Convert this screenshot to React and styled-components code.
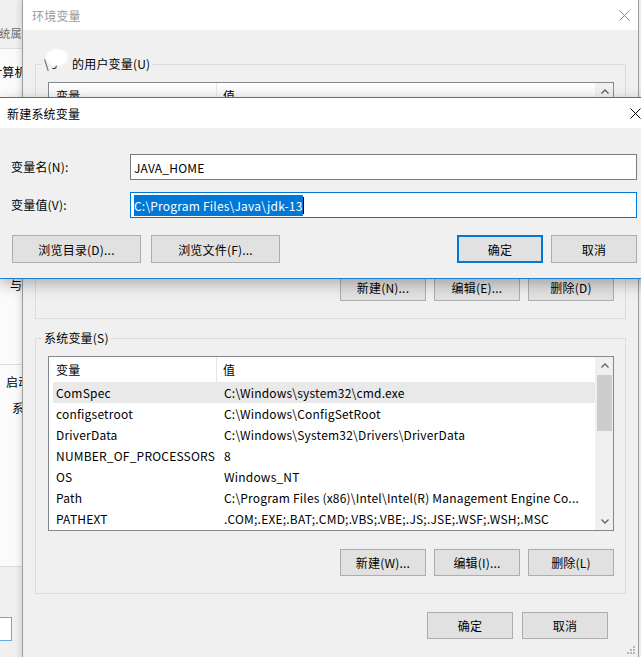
import React from 'react';
import styled, { createGlobalStyle } from 'styled-components';

const Global = createGlobalStyle`
  html, body {
    margin: 0;
    padding: 0;
    background: #f0f0f0;
  }
  body {
    font-family: "Noto Sans CJK SC", "Noto Sans", sans-serif;
    font-size: 12px;
    letter-spacing: 0.2px;
    color: #000;
  }
`;

const Desktop = styled.div`
  position: relative;
  width: 641px;
  height: 657px;
  overflow: hidden;
  background: #f0f0f0;
`;

/* ---------- background window (系统属性) ---------- */
const BackWindow = styled.div`
  position: absolute;
  left: -100px;
  top: 0;
  width: 124px;
  height: 657px;
  display: flex;
  flex-direction: column;
  background: #fbfbfb;
`;

const BackTitle = styled.div`
  box-sizing: border-box;
  height: 49px;
  padding: 24px 0 0 88px;
  line-height: 18px;
  font-size: 11px;
  white-space: nowrap;
  color: #6d6d6d;
  background: #f0f0f0;
  border-bottom: 1px solid #dcdcdc;
`;

const BackText = styled.div`
  height: 18px;
  line-height: 18px;
  margin-top: ${p => p.$gap}px;
  padding-left: ${p => p.$indent}px;
  white-space: nowrap;
`;

const BackRule = styled.div`
  height: 1px;
  margin-top: ${p => p.$gap}px;
  background: #dcdcdc;
`;

const BackFooter = styled.div`
  flex: 1;
  margin-top: ${p => p.$gap}px;
  padding-top: 50px;
  background: #f0f0f0;
  border-top: 1px solid #dcdcdc;
`;

const BackInput = styled.div`
  box-sizing: border-box;
  width: 92px;
  height: 24px;
  margin-left: 20px;
  background: #fff;
  border: 1px solid #6aa9e4;
`;

/* ---------- 环境变量 window ---------- */
const EnvWindow = styled.div`
  position: absolute;
  left: 22px;
  top: -1px;
  box-sizing: border-box;
  width: 617px;
  height: 662px;
  display: flex;
  flex-direction: column;
  background: #f0f0f0;
  border: 1px solid #9b9b9b;
  box-shadow: -2px 0 6px rgba(0, 0, 0, 0.12);
`;

const EnvTitleBar = styled.div`
  height: 30px;
  display: flex;
  align-items: center;
  justify-content: space-between;
  padding: 0 8px 0 9px;
  background: #fff;
  color: #999;
`;

const EnvBody = styled.div`
  display: flex;
  flex-direction: column;
  padding: 26px 12px 0;
`;

const Group = styled.fieldset`
  margin: ${p => p.$top || 0}px 0 0;
  padding: 10px 11px 17px 12px;
  border: 1px solid #dcdcdc;
  min-width: 0;
`;

const Legend = styled.legend`
  position: relative;
  margin-left: -6px;
  padding: 0 2px;
  line-height: 16px;
`;

const Owner = styled.span`
  display: inline-block;
  width: 28px;
  color: #333;
`;

const Blob = styled.span`
  position: absolute;
  left: 5px;
  top: -6px;
  width: 20px;
  height: 15px;
  border-radius: 50%;
  background: #fff;
  box-shadow: 0 0 2px 1px #fff;
`;

const ListBox = styled.div`
  box-sizing: border-box;
  height: 175px;
  display: flex;
  background: #fff;
  border: 1px solid #828790;
`;

const ListMain = styled.div`
  flex: 1;
  min-width: 0;
  display: flex;
  flex-direction: column;
`;

const ListHeader = styled.div`
  height: 25px;
  display: grid;
  grid-template-columns: 168px 1fr;
  background: ${p => (p.$shade ? 'linear-gradient(#fff, #f1f1f1)' : '#fff')};
`;

const HeadCell = styled.div`
  line-height: 25px;
  padding-left: ${p => (p.$first ? 7 : 6)}px;
  border-right: ${p => (p.$first ? '1px solid #e5e5e5' : 'none')};
`;

const Rows = styled.div`
  padding-left: 4px;
`;

const Row = styled.div`
  height: 21px;
  line-height: 21px;
  display: grid;
  grid-template-columns: 164px 1fr;
  background: ${p => (p.$selected ? '#e9e9e9' : 'transparent')};
  white-space: nowrap;
`;

const Cell = styled.div`
  padding-left: ${p => (p.$first ? 3 : 7)}px;
  overflow: hidden;
`;

const ScrollBar = styled.div`
  width: 17px;
  display: flex;
  flex-direction: column;
  background: #f0f0f0;
  border-left: 1px solid #f0f0f0;
`;

const ArrowBtn = styled.div`
  height: 17px;
  display: flex;
  align-items: center;
  justify-content: center;
`;

const Track = styled.div`
  flex: 1;
`;

const Thumb = styled.div`
  height: 56px;
  margin: 1px 1px 0;
  background: #cdcdcd;
`;

const ButtonRow = styled.div`
  display: flex;
  justify-content: ${p => p.$justify || 'flex-end'};
  gap: ${p => p.$gap || 8}px;
  margin-top: ${p => p.$top || 0}px;
  padding-right: ${p => p.$right || 0}px;
`;

const Button = styled.button`
  box-sizing: border-box;
  width: ${p => p.$w || 86}px;
  height: ${p => p.$h || 27}px;
  padding: 0;
  font: inherit;
  letter-spacing: inherit;
  color: #000;
  background: #e1e1e1;
  border: ${p => (p.$default ? '2px solid #0078d7' : '1px solid #adadad')};
`;

const Grip = styled.svg`
  position: absolute;
  right: 3px;
  bottom: 6px;
`;

/* ---------- 新建系统变量 dialog ---------- */
const Dialog = styled.div`
  position: absolute;
  left: -1px;
  top: 97px;
  box-sizing: border-box;
  width: 660px;
  height: 182px;
  display: flex;
  flex-direction: column;
  background: #f0f0f0;
  border: 1px solid #1c7fd3;
  box-shadow: 0 5px 14px rgba(0, 0, 0, 0.28);
`;

const DialogTitle = styled.div`
  height: 30px;
  display: flex;
  align-items: center;
  justify-content: space-between;
  padding-left: 7px;
  background: #fff;
`;

const CloseBtn = styled.div`
  width: 46px;
  height: 30px;
  display: flex;
  align-items: center;
  justify-content: center;
`;

const DialogBody = styled.div`
  display: flex;
  flex-direction: column;
  padding: 26px 21px 15px 11px;
`;

const FieldRow = styled.div`
  display: flex;
  align-items: center;
  margin-top: ${p => p.$top || 0}px;
`;

const Label = styled.div`
  width: 119px;
  margin-top: -1px;
`;

const Field = styled.div`
  box-sizing: border-box;
  flex: 1;
  height: 26px;
  display: flex;
  align-items: center;
  padding-left: 3px;
  background: #fff;
  border: 1px solid ${p => (p.$focused ? '#0078d7' : '#7a7a7a')};
  white-space: nowrap;
`;

const Selected = styled.span`
  line-height: 21px;
  color: #fff;
  background: #0078d7;
`;

const Caret = styled.span`
  width: 1px;
  height: 17px;
  background: #000;
`;

const ButtonGroup = styled.div`
  display: flex;
  gap: ${p => p.$gap}px;
  margin-left: ${p => p.$left || 0}px;
`;

const Close = ({ color }) => (
  <svg width="11" height="11" viewBox="0 0 11 11">
    <path d="M0.5 0.5 L10.5 10.5 M10.5 0.5 L0.5 10.5" stroke={color} strokeWidth="1" fill="none" />
  </svg>
);

const Chevron = ({ up }) => (
  <svg width="8" height="5" viewBox="0 0 8 5">
    <polyline
      points={up ? '0.5,4.5 4,1 7.5,4.5' : '0.5,0.5 4,4 7.5,0.5'}
      stroke="#606060"
      strokeWidth="1.3"
      fill="none"
    />
  </svg>
);

const sysVars = [
  ['ComSpec', 'C:\\Windows\\system32\\cmd.exe'],
  ['configsetroot', 'C:\\Windows\\ConfigSetRoot'],
  ['DriverData', 'C:\\Windows\\System32\\Drivers\\DriverData'],
  ['NUMBER_OF_PROCESSORS', '8'],
  ['OS', 'Windows_NT'],
  ['Path', 'C:\\Program Files (x86)\\Intel\\Intel(R) Management Engine Co...'],
  ['PATHEXT', '.COM;.EXE;.BAT;.CMD;.VBS;.VBE;.JS;.JSE;.WSF;.WSH;.MSC'],
];

const userVars = [
  ['OneDrive', 'C:\\Users\\Administrator\\OneDrive'],
  ['Path', 'C:\\Users\\Administrator\\AppData\\Local\\Microsoft\\WindowsApps;'],
  ['TEMP', 'C:\\Users\\Administrator\\AppData\\Local\\Temp'],
  ['TMP', 'C:\\Users\\Administrator\\AppData\\Local\\Temp'],
];

function VarList({ vars, shade, selected }) {
  return (
    <ListBox>
      <ListMain>
        <ListHeader $shade={shade}>
          <HeadCell $first>变量</HeadCell>
          <HeadCell>值</HeadCell>
        </ListHeader>
        <Rows>
          {vars.map(([name, value], i) => (
            <Row key={name} $selected={i === selected}>
              <Cell $first>{name}</Cell>
              <Cell>{value}</Cell>
            </Row>
          ))}
        </Rows>
      </ListMain>
      <ScrollBar>
        <ArrowBtn><Chevron up /></ArrowBtn>
        <Track><Thumb /></Track>
        <ArrowBtn><Chevron /></ArrowBtn>
      </ScrollBar>
    </ListBox>
  );
}

export default function App() {
  return (
    <Desktop>
      <Global />

      <BackWindow>
        <BackTitle>系统属性</BackTitle>
        <BackText $gap={14} $indent={90}>计算机名</BackText>
        <BackText $gap={195} $indent={110}>与</BackText>
        <BackRule $gap={70} />
        <BackText $gap={8} $indent={106}>启动</BackText>
        <BackText $gap={8} $indent={112}>系</BackText>
        <BackFooter $gap={149}>
          <BackInput />
        </BackFooter>
      </BackWindow>

      <EnvWindow>
        <EnvTitleBar>
          <span>环境变量</span>
          <Close color="#8a8a8a" />
        </EnvTitleBar>
        <EnvBody>
          <Group>
            <Legend><Blob /><Owner>\ ɔ</Owner>的用户变量(U)</Legend>
            <VarList vars={userVars} shade />
            <ButtonRow $top={17}>
              <Button>新建(N)...</Button>
              <Button>编辑(E)...</Button>
              <Button>删除(D)</Button>
            </ButtonRow>
          </Group>
          <Group $top={11}>
            <Legend>系统变量(S)</Legend>
            <VarList vars={sysVars} selected={0} />
            <ButtonRow $top={18}>
              <Button>新建(W)...</Button>
              <Button>编辑(I)...</Button>
              <Button>删除(L)</Button>
            </ButtonRow>
          </Group>
          <ButtonRow $top={18} $gap={9} $right={18}>
            <Button>确定</Button>
            <Button>取消</Button>
          </ButtonRow>
        </EnvBody>
        <Grip width="8" height="8" viewBox="0 0 8 8">
          {[[6, 0], [6, 3], [3, 3], [6, 6], [3, 6], [0, 6]].map(([x, y]) => (
            <rect key={`${x}-${y}`} x={x} y={y} width="2" height="2" fill="#b8b8b8" />
          ))}
        </Grip>
      </EnvWindow>

      <Dialog>
        <DialogTitle>
          <span>新建系统变量</span>
          <CloseBtn><Close color="#000" /></CloseBtn>
        </DialogTitle>
        <DialogBody>
          <FieldRow>
            <Label>变量名(N):</Label>
            <Field>JAVA_HOME</Field>
          </FieldRow>
          <FieldRow $top={12}>
            <Label>变量值(V):</Label>
            <Field $focused>
              <Selected>C:\Program Files\Java\jdk-13</Selected>
              <Caret />
            </Field>
          </FieldRow>
          <ButtonRow $top={17} $justify="space-between">
            <ButtonGroup $gap={10} $left={1}>
              <Button $w={129} $h={28}>浏览目录(D)...</Button>
              <Button $w={129} $h={28}>浏览文件(F)...</Button>
            </ButtonGroup>
            <ButtonGroup $gap={8}>
              <Button $h={28} $default>确定</Button>
              <Button $h={28}>取消</Button>
            </ButtonGroup>
          </ButtonRow>
        </DialogBody>
      </Dialog>
    </Desktop>
  );
}
